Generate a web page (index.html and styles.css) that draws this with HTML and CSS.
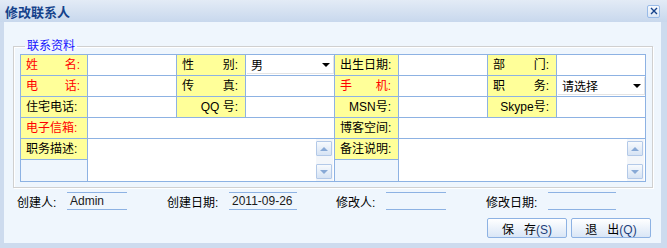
FILE: index.html
```html
<!DOCTYPE html>
<html lang="zh-CN">
  <head>
    <meta charset="UTF-8" />
    <title>修改联系人</title>
    <link rel="stylesheet" href="styles.css">
  </head>
  <body>
    <div class="win">
      <div class="win-head">
        <span class="win-title">修改联系人</span>
        <span class="win-close">
          <svg width="8" height="8" viewBox="0 0 8 8">
            <path d="M1 1 L7 7 M7 1 L1 7" stroke="#15428b" stroke-width="1.4" fill="none" />
          </svg>
        </span>
      </div>

      <div class="win-body">
        <fieldset class="group">
          <legend>联系资料</legend>
          <div class="form-grid">
            <!-- 第一行 -->
            <div class="lbl spread req"><span>姓</span><span>名:</span></div>
            <div class="val"></div>
            <div class="lbl spread"><span>性</span><span>别:</span></div>
            <div class="val pick"><span class="pick-box">男<i class="arrow"></i></span></div>
            <div class="lbl">出生日期:</div>
            <div class="val"></div>
            <div class="lbl spread"><span>部</span><span>门:</span></div>
            <div class="val"></div>

            <!-- 第二行 -->
            <div class="lbl spread req"><span>电</span><span>话:</span></div>
            <div class="val"></div>
            <div class="lbl spread"><span>传</span><span>真:</span></div>
            <div class="val"></div>
            <div class="lbl spread req"><span>手</span><span>机:</span></div>
            <div class="val"></div>
            <div class="lbl spread"><span>职</span><span>务:</span></div>
            <div class="val pick"><span class="pick-box">请选择<i class="arrow"></i></span></div>

            <!-- 第三行 -->
            <div class="lbl">住宅电话:</div>
            <div class="val"></div>
            <div class="lbl right">QQ 号:</div>
            <div class="val"></div>
            <div class="lbl right">MSN号:</div>
            <div class="val"></div>
            <div class="lbl right">Skype号:</div>
            <div class="val"></div>

            <!-- 第四行 -->
            <div class="lbl req">电子信箱:</div>
            <div class="val wide"></div>
            <div class="lbl">博客空间:</div>
            <div class="val wide"></div>

            <!-- 多行文本 -->
            <div class="lbl">职务描述:</div>
            <div class="val wide memo">
              <div class="memo-text"></div>
              <div class="scroll">
                <span class="scroll-btn"><i class="tri up"></i></span>
                <span class="scroll-btn"><i class="tri down"></i></span>
              </div>
            </div>
            <div class="lbl">备注说明:</div>
            <div class="val wide memo">
              <div class="memo-text"></div>
              <div class="scroll">
                <span class="scroll-btn"><i class="tri up"></i></span>
                <span class="scroll-btn"><i class="tri down"></i></span>
              </div>
            </div>
            <div class="blank"></div>
            <div class="blank"></div>
          </div>
        </fieldset>

        <div class="info-row">
          <span class="info-label">创建人:</span>
          <span class="info-box short">Admin</span>
          <span class="info-label long">创建日期:</span>
          <span class="info-box">2011-09-26</span>
          <span class="info-label">修改人:</span>
          <span class="info-box short"></span>
          <span class="info-label long">修改日期:</span>
          <span class="info-box"></span>
        </div>

        <div class="btn-row">
          <button class="btn"><span class="gap">保</span>存<span class="key">(S)</span></button>
          <button class="btn"><span class="gap">退</span>出<span class="key">(Q)</span></button>
        </div>
      </div>
    </div>
  </body>
</html>
```

FILE: styles.css
```css
* {
  box-sizing: border-box;
  margin: 0;
  padding: 0;
}

body {
  font-family: "Liberation Sans", "Noto Sans CJK SC", sans-serif;
  font-size: 12px;
  color: #000;
  background-color: #cddbee;
}

.win {
  width: 667px;
  height: 248px;
  background-color: #cddbee;
}

.win-head {
  height: 22px;
  display: flex;
  align-items: center;
  justify-content: space-between;
  padding: 0 7px 0 5px;
  background: linear-gradient(#e3ebf6, #c8d8ed);
}

.win-title {
  font-size: 13px;
  font-weight: bold;
  color: #15428b;
}

.win-close {
  width: 13px;
  height: 13px;
  display: flex;
  align-items: center;
  justify-content: center;
  border: 1px solid #99bbe8;
  border-radius: 2px;
  background: linear-gradient(#f6f9fd, #dbe6f5);
}

.win-body {
  height: 221px;
  margin: 0 6px 0 4px;
  padding-top: 16px;
  background-color: #eff6fd;
}

.group {
  width: 640px;
  margin-left: 9px;
  padding: 0 6px 5px;
  border: 1px solid #d0d0d0;
  box-shadow: inset 1px 1px 0 #fff, 1px 1px 0 #fff;
}

.group legend {
  margin-left: 5px;
  padding: 0 2px;
  line-height: 16px;
  color: #1414ff;
}

.form-grid {
  display: grid;
  grid-template-columns: 66px 88px 68px 88px 63px 88px 68px 88px;
  grid-template-rows: repeat(5, 20px) 21px;
  gap: 1px;
  padding: 1px;
  background-color: #8db2e3;
}

.lbl {
  background-color: #ffff99;
  padding: 0 7px 0 5px;
  line-height: 20px;
  white-space: nowrap;
}

.spread {
  display: flex;
  justify-content: space-between;
}

.right {
  text-align: right;
}

.req {
  color: #ff0000;
}

.val {
  background-color: #fff;
}

.wide {
  grid-column: span 3;
}

.pick {
  padding: 1px 0 1px 1px;
}

.pick-box {
  height: 18px;
  display: flex;
  align-items: center;
  justify-content: space-between;
  padding: 0 3px 0 4px;
  border-right: 1px solid #e4e4e4;
  border-bottom: 1px solid #e4e4e4;
  font-size: 12px;
}

.arrow {
  width: 0;
  height: 0;
  border-left: 4px solid transparent;
  border-right: 4px solid transparent;
  border-top: 4px solid #000;
}

.memo {
  grid-row: span 2;
  display: flex;
}

.memo-text {
  flex: 1;
}

.scroll {
  width: 17px;
  margin-right: 1px;
  padding: 2px 0;
  display: flex;
  flex-direction: column;
  justify-content: space-between;
  background-color: #f3f6fa;
}

.scroll-btn {
  width: 16px;
  height: 15px;
  display: flex;
  align-items: center;
  justify-content: center;
  border: 1px solid #b3c9e8;
  border-radius: 1px;
  background: linear-gradient(#f7fafd, #d6e3f4);
}

.tri {
  width: 0;
  height: 0;
  border-left: 4px solid transparent;
  border-right: 4px solid transparent;
}

.tri.up {
  border-bottom: 4px solid #88a9d6;
}

.tri.down {
  border-top: 4px solid #88a9d6;
}

.blank {
  background-color: #eff6fd;
}

.info-row {
  display: flex;
  align-items: center;
  height: 18px;
  margin-top: 4px;
  padding-left: 13px;
}

.info-label {
  width: 50px;
}

.info-label.long {
  width: 62px;
}

.info-box {
  width: 68px;
  height: 18px;
  margin-right: 39px;
  padding-left: 3px;
  line-height: 16px;
  border-top: 1px solid #8db2e3;
  border-bottom: 1px solid #8db2e3;
  color: #1a1a1a;
}

.info-box.short {
  width: 60px;
  margin-right: 40px;
}

.btn-row {
  display: flex;
  justify-content: flex-end;
  gap: 4px;
  margin-top: 8px;
  padding-right: 10px;
}

.btn {
  width: 80px;
  height: 20px;
  font-family: "Liberation Sans", "Noto Sans CJK SC", sans-serif;
  font-size: 12px;
  color: #000;
  border: 1px solid #8db2e3;
  border-radius: 2px;
  background: linear-gradient(#ffffff, #d9e6f6);
  cursor: pointer;
}

.btn .gap {
  margin-right: 10px;
}

.btn .key {
  color: #1e3f7a;
}
```
